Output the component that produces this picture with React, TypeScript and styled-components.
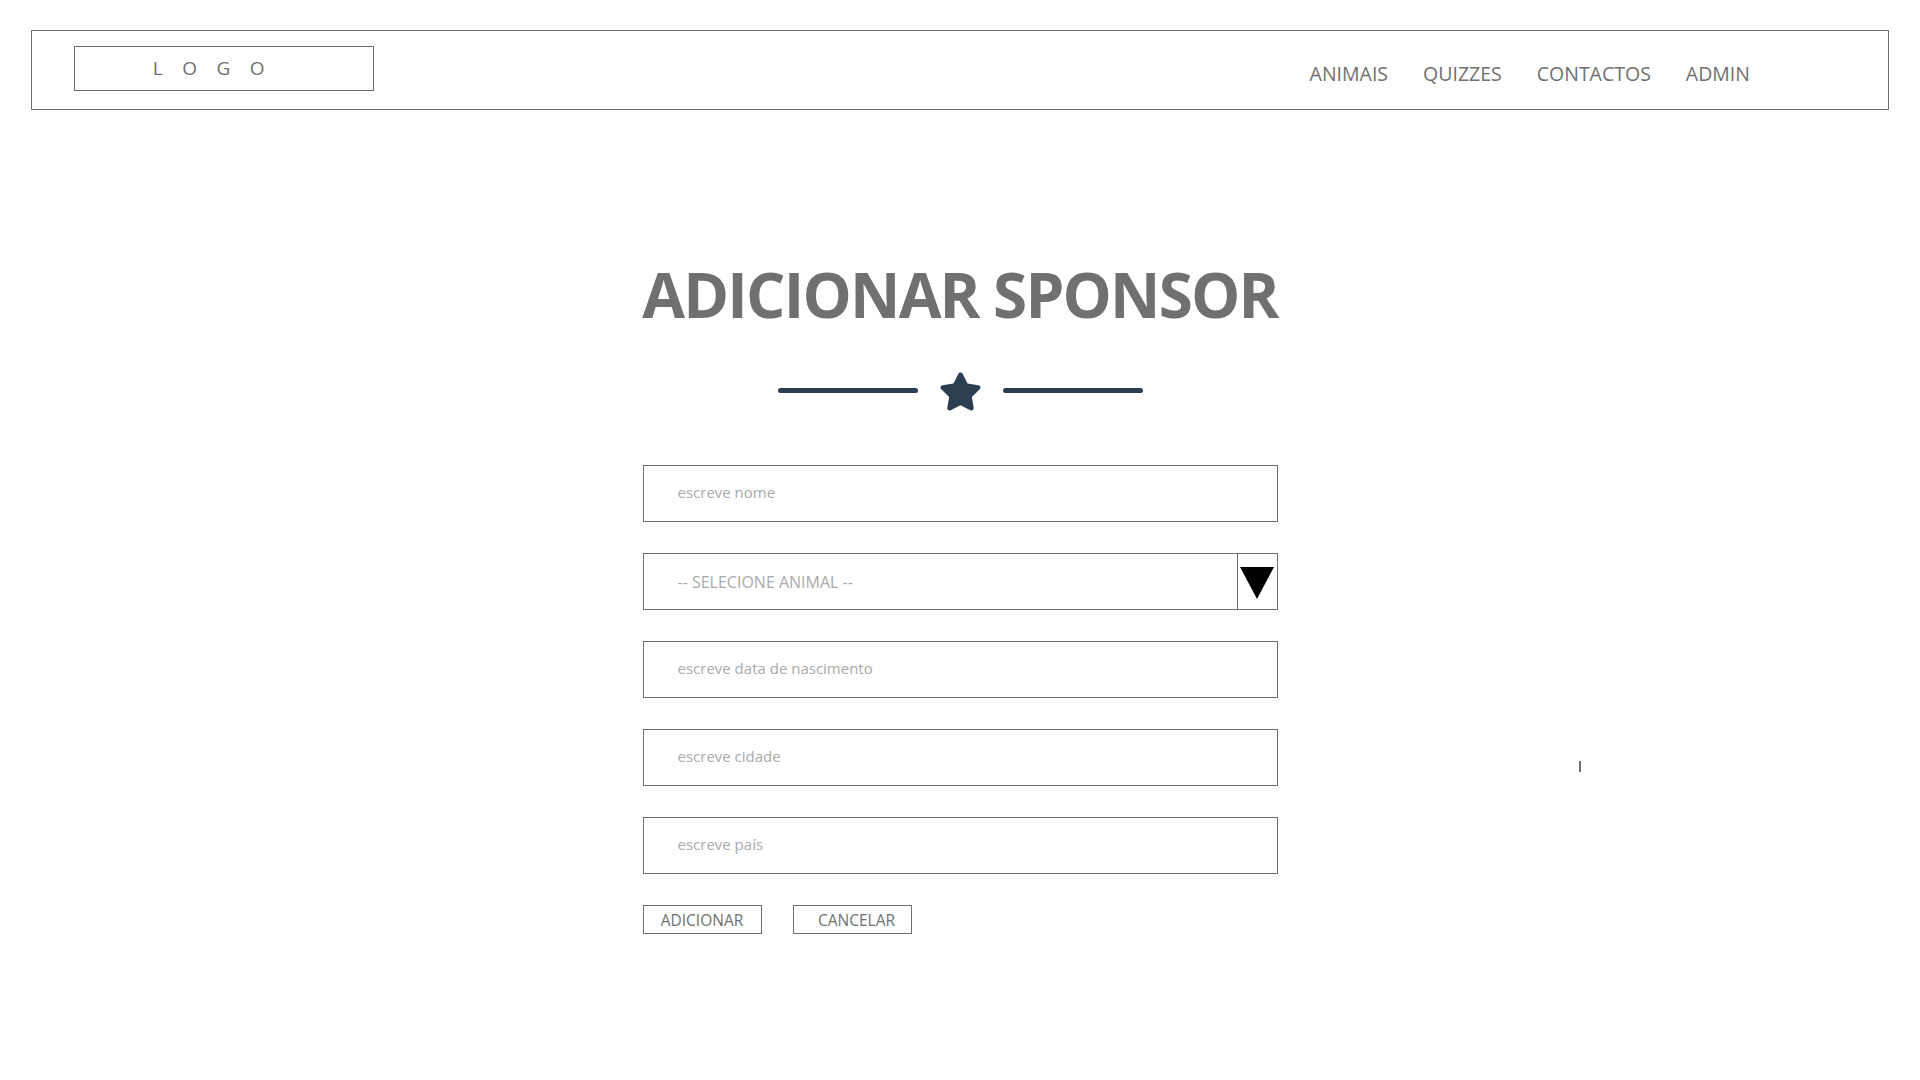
import styled, { createGlobalStyle } from "styled-components";
import { FaStar } from "react-icons/fa";

const GlobalStyle = createGlobalStyle`
  * {
    box-sizing: border-box;
  }
  body {
    margin: 0;
    background: #ffffff;
    font-family: "Open Sans", "Liberation Sans", sans-serif;
    color: #707070;
  }
`;

const fields = [
  "escreve nome",
  "escreve data de nascimento",
  "escreve cidade",
  "escreve país",
];

export default function App() {
  return (
    <Page>
      <GlobalStyle />
      <Header>
        <Logo>LOGO</Logo>
        <Nav>
          <NavLink>ANIMAIS</NavLink>
          <NavLink>QUIZZES</NavLink>
          <NavLink>CONTACTOS</NavLink>
          <NavLink>ADMIN</NavLink>
        </Nav>
      </Header>

      <Main>
        <Title>ADICIONAR SPONSOR</Title>
        <Divider>
          <Line />
          <FaStar size={43} color="#2c3e50" />
          <Line />
        </Divider>

        <Form>
          <Input placeholder={fields[0]} />
          <SelectBox>
            <SelectText>-- SELECIONE ANIMAL --</SelectText>
            <Arrow>
              <svg width="34" height="32" viewBox="0 0 34 32">
                <polygon points="0,0 34,0 17,32" fill="#000000" />
              </svg>
            </Arrow>
          </SelectBox>
          <Input placeholder={fields[1]} />
          <Input placeholder={fields[2]} />
          <Input placeholder={fields[3]} />
          <Buttons>
            <Button>ADICIONAR</Button>
            <Button $shift>CANCELAR</Button>
          </Buttons>
        </Form>
      </Main>

      <Caret />
    </Page>
  );
}

const Page = styled.div`
  position: relative;
  min-height: 1080px;
  padding-top: 30px;
`;

const Header = styled.header`
  display: flex;
  align-items: center;
  justify-content: space-between;
  margin: 0 31px;
  height: 80px;
  border: 1px solid #707070;
  padding: 0 138px 0 42px;
`;

const Logo = styled.div`
  width: 300px;
  height: 45px;
  margin-bottom: 4px;
  border: 1px solid #707070;
  display: flex;
  align-items: center;
  justify-content: center;
  font-size: 19px;
  letter-spacing: 19.5px;
  padding-right: 11px;
  color: #707070;
`;

const Nav = styled.nav`
  display: flex;
  gap: 35px;
  margin-top: 6px;
`;

const NavLink = styled.a`
  font-size: 19.5px;
  color: #707070;
  cursor: pointer;
`;

const Main = styled.main`
  display: flex;
  flex-direction: column;
  align-items: center;
  padding-top: 139px;
`;

const Title = styled.h1`
  margin: 0;
  font-size: 62px;
  font-weight: 700;
  letter-spacing: -1.8px;
  line-height: 90px;
  color: #707070;
`;

const Divider = styled.div`
  display: flex;
  align-items: center;
  gap: 21px;
  margin-top: 31px;
  height: 42px;
`;

const Line = styled.div`
  width: 140px;
  height: 5px;
  border-radius: 3px;
  background: #2c3e50;
  margin-top: -2px;
`;

const Form = styled.form`
  display: flex;
  flex-direction: column;
  gap: 31px;
  width: 635px;
  margin-top: 53px;
`;

const Input = styled.input`
  height: 57px;
  width: 100%;
  border: 1px solid #707070;
  padding: 0 34px 3px;
  font-family: "Open Sans", "Liberation Sans", sans-serif;
  font-size: 15px;
  color: #707070;
  outline: none;

  &::placeholder {
    color: #aaaaaa;
  }
`;

const SelectBox = styled.div`
  display: flex;
  height: 57px;
  border: 1px solid #707070;
`;

const SelectText = styled.div`
  flex: 1;
  display: flex;
  align-items: center;
  padding: 0 34px;
  font-size: 16px;
  color: #aaaaaa;
`;

const Arrow = styled.div`
  width: 40px;
  border-left: 1px solid #707070;
  display: flex;
  align-items: center;
  justify-content: center;
  padding-top: 2px;
`;

const Buttons = styled.div`
  display: flex;
  gap: 31px;
`;

const Button = styled.button<{ $shift?: boolean }>`
  width: 119px;
  height: 29px;
  border: 1px solid #707070;
  background: #ffffff;
  font-family: "Open Sans", "Liberation Sans", sans-serif;
  font-size: 15.5px;
  color: #707070;
  padding: 0 0 0 ${(p) => (p.$shift ? "9px" : "0")};
  cursor: pointer;
`;

const Caret = styled.div`
  position: absolute;
  left: 1579px;
  top: 761px;
  width: 2px;
  height: 11px;
  background: #707070;
`;
